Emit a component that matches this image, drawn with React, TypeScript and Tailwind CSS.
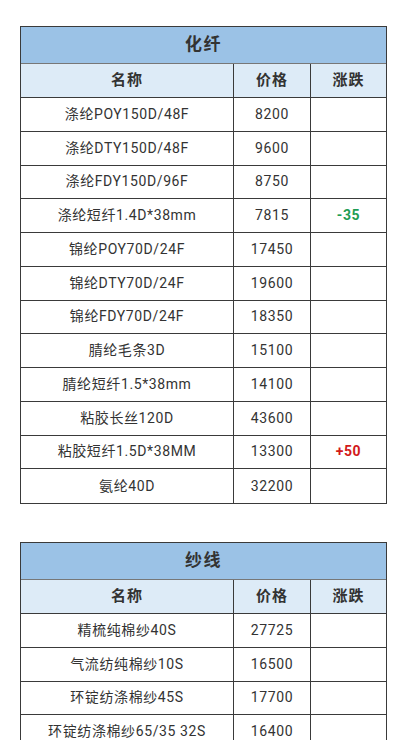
const fiber: [string, string, string?][] = [
  ["涤纶POY150D/48F", "8200"],
  ["涤纶DTY150D/48F", "9600"],
  ["涤纶FDY150D/96F", "8750"],
  ["涤纶短纤1.4D*38mm", "7815", "-35"],
  ["锦纶POY70D/24F", "17450"],
  ["锦纶DTY70D/24F", "19600"],
  ["锦纶FDY70D/24F", "18350"],
  ["腈纶毛条3D", "15100"],
  ["腈纶短纤1.5*38mm", "14100"],
  ["粘胶长丝120D", "43600"],
  ["粘胶短纤1.5D*38MM", "13300", "+50"],
  ["氨纶40D", "32200"],
];

const yarn: [string, string, string?][] = [
  ["精梳纯棉纱40S", "27725"],
  ["气流纺纯棉纱10S", "16500"],
  ["环锭纺涤棉纱45S", "17700"],
  ["环锭纺涤棉纱65/35 32S", "16400"],
  ["环锭纺涤棉纱65/35 21S", "15800"],
];

function PriceTable({ title, rows }: { title: string; rows: [string, string, string?][] }) {
  return (
    <div className="ml-[20px] w-[367px] border border-[#3a3a3a] text-[#333]">
      <div className="flex h-[37px] items-center justify-center border-b border-[#777] bg-[#9bc2e6] text-[17px] font-bold tracking-[1.5px]">
        {title}
      </div>
      <div className="flex h-[34px] border-b border-[#3a3a3a] bg-[#ddebf7] text-[15px] font-bold tracking-[1px]">
        <div className="flex w-[213px] items-center justify-center border-r border-[#3a3a3a]">名称</div>
        <div className="flex w-[77px] items-center justify-center border-r border-[#3a3a3a]">价格</div>
        <div className="flex flex-1 items-center justify-center">涨跌</div>
      </div>
      {rows.map(([name, price, change], i) => (
        <div
          key={name}
          className={
            "flex h-[33.75px] text-[14px] tracking-[0.6px] " +
            (i < rows.length - 1 ? "border-b border-[#3a3a3a]" : "")
          }
        >
          <div className="flex w-[213px] items-center justify-center border-r border-[#3a3a3a]">{name}</div>
          <div className="flex w-[77px] items-center justify-center border-r border-[#3a3a3a]">{price}</div>
          <div
            className={
              "flex flex-1 items-center justify-center font-bold " +
              (change && change.startsWith("-") ? "text-[#1f9d55]" : "text-[#d21a1a]")
            }
          >
            {change}
          </div>
        </div>
      ))}
    </div>
  );
}

export default function App() {
  return (
    <div
      className="h-[740px] overflow-hidden bg-white pt-[26px]"
      style={{ fontFamily: 'Roboto, "Noto Sans CJK SC", sans-serif' }}
    >
      <PriceTable title="化纤" rows={fiber} />
      <div className="h-[38px]" />
      <PriceTable title="纱线" rows={yarn} />
    </div>
  );
}
